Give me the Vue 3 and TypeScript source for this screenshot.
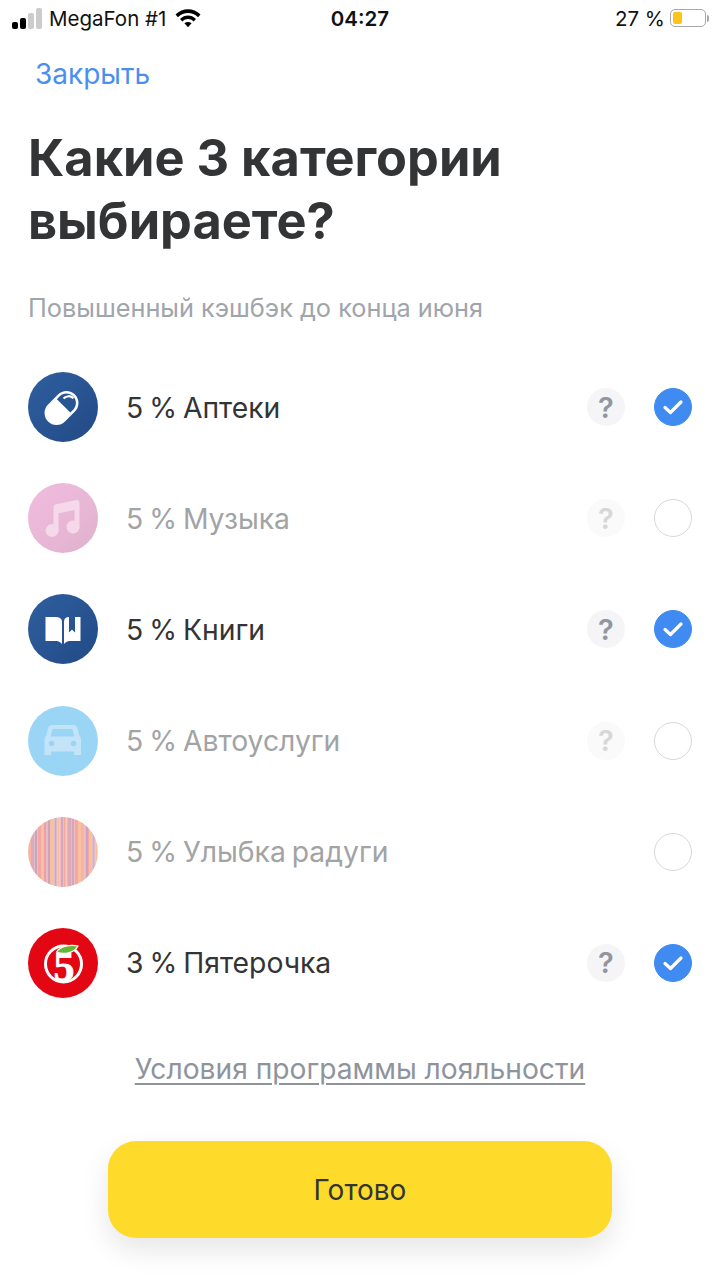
<script setup lang="ts">
interface Category {
  label: string
  icon: string
  active: boolean
  help: boolean
}

const categories: Category[] = [
  { label: '5 % Аптеки', icon: 'pill', active: true, help: true },
  { label: '5 % Музыка', icon: 'music', active: false, help: true },
  { label: '5 % Книги', icon: 'book', active: true, help: true },
  { label: '5 % Автоуслуги', icon: 'car', active: false, help: true },
  { label: '5 % Улыбка радуги', icon: 'rainbow', active: false, help: false },
  { label: '3 % Пятерочка', icon: 'five', active: true, help: true },
]

// полоски для иконки "Улыбка радуги"
const stripeColors = ['#f8b3a2', '#cfa8bf', '#f6bd9e', '#eb9fa8', '#cba5c0', '#f9c0a0', '#dcaab8', '#f4a8a4']
const stripeWidths = [3, 1.5, 2, 1, 3.5, 1.5, 1, 2.5]
const stripes: { x: number; w: number; c: string }[] = []
let sx = 0
let si = 0
while (sx < 70) {
  const w = stripeWidths[(si * 3 + (si % 5)) % 8]
  stripes.push({ x: sx, w, c: stripeColors[(si * 5 + (si % 3)) % 8] })
  sx += w
  si++
}
</script>

<template>
  <div class="screen">
    <div class="status">
      <div class="status-left">
        <span class="signal">
          <i class="on h1"></i><i class="on h2"></i><i class="h3"></i><i class="h4"></i>
        </span>
        <span>MegaFon #1</span>
        <svg class="wifi" width="26" height="20" viewBox="0 0 26 20">
          <path d="M0.5 6.500C7.500 -0.600 18.500 -0.600 25.500 6.500L23 9.200C17.300 3.600 8.700 3.600 3 9.200Z" fill="#000" />
          <path d="M5 11C9.800 6.400 16.200 6.400 21 11L18.600 13.500C15 10.300 11 10.300 7.400 13.500Z" fill="#000" />
          <path d="M9.400 15.300C11.600 13.600 14.400 13.600 16.600 15.300L13 19.200Z" fill="#000" />
        </svg>
      </div>
      <div class="status-time">04:27</div>
      <div class="status-right">
        <span>27 %</span>
        <span class="battery"><i></i></span>
        <span class="battery-tip"></span>
      </div>
    </div>

    <div class="close">Закрыть</div>
    <h1 class="title">Какие 3 категории<br />выбираете?</h1>
    <p class="subtitle">Повышенный кэшбэк до конца июня</p>

    <ul class="list">
      <li v-for="c in categories" :key="c.label" class="row" :class="{ off: !c.active }">
        <span class="icon" :class="'icon-' + c.icon">
          <svg v-if="c.icon === 'pill'" width="70" height="70" viewBox="0 0 70 70">
            <g transform="rotate(-45 33.500 36)">
              <rect x="14.500" y="24" width="38" height="24" rx="12" fill="#fff" />
              <path d="M36.500 26.500H40.500C45.700 26.500 50 30.800 50 36C50 41.200 45.700 45.500 40.500 45.500H36.500Z" fill="#2a5593" />
            </g>
            <path d="M35.500 26.500C38.500 23.500 42.500 23.500 45.500 26.300" fill="none" stroke="#fff" stroke-width="2.200" />
          </svg>
          <svg v-else-if="c.icon === 'music'" width="70" height="70" viewBox="0 0 70 70">
            <path d="M25.500 49V24C25.500 22.500 26.500 21.500 28 21.200L48.500 17C50 16.700 51.500 17.800 51.500 19.500V45H46.500V27L30.500 30.300V49Z" fill="#f5d8ea" />
            <circle cx="24" cy="47.500" r="6.500" fill="#f5d8ea" />
            <circle cx="45" cy="44" r="6.500" fill="#f5d8ea" />
          </svg>
          <svg v-else-if="c.icon === 'book'" width="70" height="70" viewBox="0 0 70 70">
            <path d="M17.500 23H28C31 23 33.500 24.500 34 27V50C32 47.500 29.500 47 27 47H17.500Z" fill="#fff" />
            <path d="M36 27C36.500 24.500 38 23 41 23V38.500L44 35.500L47 38.500V23H52.500V47H43C40.500 47 38 47.500 36 50Z" fill="#fff" />
          </svg>
          <svg v-else-if="c.icon === 'car'" width="70" height="70" viewBox="0 0 70 70">
            <path d="M24 19H45C47.500 19 49 20.500 49.500 22.500L51 29C52.500 30.500 53 32 53 34V49H46V45.500H23V49H16.500V34C16.500 32 17 30.500 18.500 29L20 22.500C20.500 20.500 22 19 24 19Z" fill="#c3e4f8" />
            <path d="M24.500 23H44.500L46.500 30.500H22.500Z" fill="#9bd5f5" />
            <circle cx="23.500" cy="37.500" r="2.800" fill="#9bd5f5" />
            <circle cx="45.500" cy="37.500" r="2.800" fill="#9bd5f5" />
          </svg>
          <svg v-else-if="c.icon === 'rainbow'" width="70" height="70" viewBox="0 0 70 70">
            <rect v-for="s in stripes" :key="s.x" :x="s.x" y="0" :width="s.w" height="70" :fill="s.c" />
          </svg>
          <svg v-else width="70" height="70" viewBox="0 0 70 70">
            <circle cx="35.500" cy="36" r="18" fill="none" stroke="#fff" stroke-width="3" />
            <text x="36" y="53" text-anchor="middle" class="five">5</text>
            <path d="M28.500 24C32 18.500 42 16 50 18C47 24 37 27.500 28.500 24Z" fill="#62b734" stroke="#fff" stroke-width="1.200" />
          </svg>
        </span>
        <span class="label">{{ c.label }}</span>
        <span v-if="c.help" class="help">?</span>
        <span class="check" :class="{ checked: c.active }">
          <svg v-if="c.active" width="22" height="18" viewBox="0 0 22 18">
            <path d="M3 9.500L8.500 14.500L19 4" fill="none" stroke="#fff" stroke-width="3.200" stroke-linecap="round" stroke-linejoin="round" />
          </svg>
        </span>
      </li>
    </ul>

    <div class="terms">Условия программы лояльности</div>
    <button class="done" type="button">Готово</button>
  </div>
</template>

<style>
body {
  background: #fff;
}
</style>

<style scoped>
.screen {
  width: 720px;
  height: 1280px;
  overflow: hidden;
  background: #fff;
  font-family: Inter, "Liberation Sans", sans-serif;
  color: #333436;
  display: flex;
  flex-direction: column;
}

.status {
  height: 36px;
  display: grid;
  grid-template-columns: 1fr auto 1fr;
  align-items: center;
  padding: 0 11px;
  font-size: 20.500px;
  color: #111;
}

.status-left {
  display: flex;
  align-items: center;
  gap: 7px;
  padding-left: 1px;
}

.signal {
  display: flex;
  align-items: flex-end;
  gap: 2px;
  height: 21px;
}

.signal i {
  width: 6px;
  background: #ccc;
  border-radius: 2px;
}

.signal .on {
  background: #000;
}

.h1 {
  height: 7px;
}

.h2 {
  height: 11px;
}

.h3 {
  height: 16px;
}

.h4 {
  height: 21px;
}

.wifi {
  margin-left: 2px;
}

.status-time {
  font-weight: 600;
}

.status-right {
  display: flex;
  align-items: center;
  justify-content: flex-end;
}

.battery {
  width: 36px;
  height: 18px;
  margin-left: 5px;
  padding: 2px;
  box-sizing: border-box;
  border: 1px solid #a8a8a8;
  border-radius: 5px;
  display: flex;
}

.battery i {
  width: 9px;
  background: #fcc419;
  border-radius: 2px;
}

.battery-tip {
  width: 2px;
  height: 7px;
  margin-left: 1px;
  background: #a8a8a8;
  border-radius: 0 2px 2px 0;
}

.close {
  margin: 20px 0 0 35px;
  font-size: 28px;
  line-height: 36px;
  color: #4a8ff0;
}

.title {
  margin: 34px 0 0 28px;
  font-size: 50.500px;
  line-height: 63px;
  font-weight: 700;
  color: #333436;
}

.subtitle {
  margin: 40px 0 0 28px;
  font-size: 25.300px;
  line-height: 32px;
  color: #a0a4ab;
}

.list {
  list-style: none;
  margin: 48px 0 0;
  padding: 0 28px;
  display: flex;
  flex-direction: column;
  gap: 41.200px;
}

.row {
  display: flex;
  align-items: center;
  height: 70px;
  font-size: 28.300px;
  word-spacing: -2px;
}

.icon {
  width: 70px;
  height: 70px;
  border-radius: 50%;
  overflow: hidden;
  flex: none;
  display: block;
}

.icon svg {
  display: block;
}

.five {
  font-family: "Liberation Serif", serif;
  font-size: 42px;
  font-weight: 700;
  fill: #fff;
  stroke: #fff;
  stroke-width: 0.8px;
}

.icon-pill,
.icon-book {
  background: linear-gradient(135deg, #2f5f9f, #224a85);
}

.icon-music {
  background: linear-gradient(135deg, #f2bce0, #dfb2cc);
}

.icon-car {
  background: #9bd5f5;
}

.icon-five {
  background: #e30613;
}

.label {
  margin-left: 28px;
  padding-top: 1px;
  flex: 1;
}

.off .label {
  color: #a2a3a5;
}

.help {
  width: 38px;
  height: 38px;
  border-radius: 50%;
  background: #f5f5f7;
  color: #92969e;
  font-size: 29px;
  font-weight: 600;
  display: flex;
  align-items: center;
  justify-content: center;
  flex: none;
}

.off .help {
  background: #fafafb;
  color: #d6d7da;
}

.check {
  width: 38px;
  height: 38px;
  margin-left: 29px;
  border-radius: 50%;
  box-sizing: border-box;
  border: 1px solid #d8d8d8;
  display: flex;
  align-items: center;
  justify-content: center;
  flex: none;
}

.check.checked {
  background: #3f8bf2;
  border-color: #3f8bf2;
}

.terms {
  margin-top: 53px;
  text-align: center;
  font-size: 28.200px;
  line-height: 36px;
  color: #8f949c;
  text-decoration: underline;
  text-underline-offset: 4px;
  text-decoration-thickness: 2px;
}

.done {
  align-self: center;
  margin-top: 54px;
  padding-top: 3px;
  width: 504px;
  height: 97px;
  border: 0;
  border-radius: 28px;
  background: #fedb2a;
  color: #333436;
  font-family: inherit;
  font-size: 28px;
  box-shadow: 0 12px 28px rgba(0, 0, 0, 0.1);
}
</style>
